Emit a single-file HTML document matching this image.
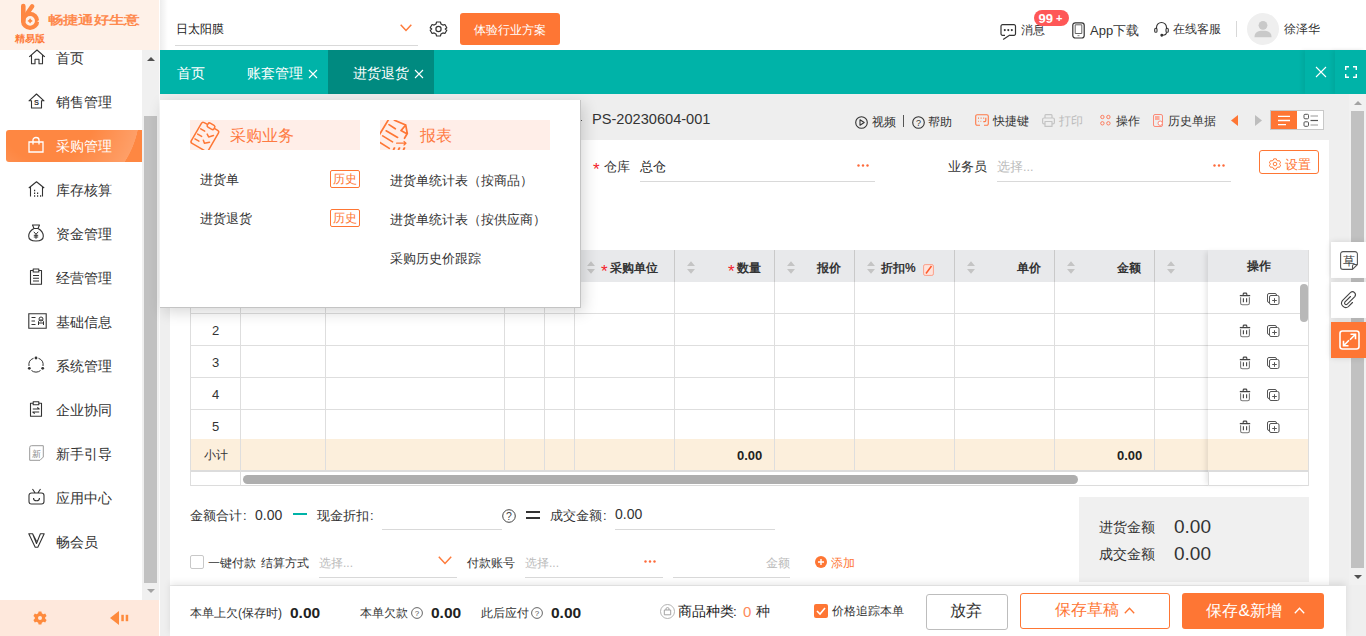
<!DOCTYPE html>
<html><head><meta charset="utf-8">
<style>
*{box-sizing:border-box;margin:0;padding:0}
html,body{width:1366px;height:636px;overflow:hidden;background:#efefef;font-family:"Liberation Sans",sans-serif;color:#333;font-size:13px}
.a{position:absolute}
.t{position:absolute;white-space:nowrap;line-height:1}
svg{position:absolute;overflow:visible}
/* sidebar */
#side{left:0;top:0;width:160px;height:636px;background:#fff}
#logo{left:0;top:0;width:159px;height:50px;background:#fef1e8}
.mi{position:absolute;left:56px;font-size:14px;color:#333;line-height:1;white-space:nowrap}
#sbtrack{left:142px;top:50px;width:17px;height:550px;background:#f0f0f0}
#sbthumb{left:144px;top:116px;width:13px;height:467px;background:#c1c1c1}
#sbot{left:0;top:600px;width:159px;height:36px;background:#fee8dc}
/* header */
#hdr{left:160px;top:0;width:1206px;height:50px;background:#fff}
#tabs{left:160px;top:50px;width:1206px;height:44px;background:#00b3a8}
.tab{position:absolute;top:66px;color:#fff;font-size:14px;line-height:1;white-space:nowrap}
/* content */
#tool{left:160px;top:94px;width:1190px;height:46px;background:#eeeeee}
#panel{left:170px;top:140px;width:1159px;height:445px;background:#fff}
#vtrack{left:1349px;top:94px;width:17px;height:491px;background:#f1f1f1}
</style></head>
<body>
<div id="side" class="a"></div>
<div id="logo" class="a"></div>
<div id="sbtrack" class="a"></div>
<div id="sbthumb" class="a"></div>
<div id="sbot" class="a"></div>

<!-- logo -->
<svg style="left:0;top:0" width="50" height="35" viewBox="0 0 50 35">
<path d="M23.3 6 V21" stroke="#fe8843" stroke-width="4.6" stroke-linecap="round"/>
<path d="M32.2 6.3 L27.2 13.5" stroke="#fe8843" stroke-width="4.4" stroke-linecap="round"/>
<circle cx="30.1" cy="20.9" r="7" fill="none" stroke="#fe8843" stroke-width="4.3"/>
<path d="M39.8 19.8 L37.2 21.3 L39.8 22.6 Z" fill="#fef1e9"/>
<path d="M30.1 18.2 Q30.9 20.1 32.8 20.9 Q30.9 21.7 30.1 23.6 Q29.3 21.7 27.4 20.9 Q29.3 20.1 30.1 18.2 Z" fill="#fe8843"/>
</svg>
<div class="t" style="left:48px;top:14px;font-size:13px;color:#fe8a4e;font-weight:bold;transform:scale(1.17,0.9);transform-origin:0 0">畅捷通好生意</div>
<div class="t" style="left:15px;top:34px;font-size:10px;color:#fe7c3a;font-weight:bold">精易版</div>
<!-- active item -->
<div class="a" style="left:6px;top:130px;width:136px;height:32px;border-radius:3px 0 0 3px;background:radial-gradient(circle 94px at 40px -19px,rgba(255,255,255,0) 50px,rgba(255,255,255,0.2) 93.5px,rgba(255,255,255,0) 94px),#fe8742"></div>
<div class="mi" style="top:51px">首页</div>
<div class="mi" style="top:95px">销售管理</div>
<div class="mi" style="top:139px;color:#fff">采购管理</div>
<div class="mi" style="top:183px">库存核算</div>
<div class="mi" style="top:227px">资金管理</div>
<div class="mi" style="top:271px">经营管理</div>
<div class="mi" style="top:315px">基础信息</div>
<div class="mi" style="top:359px">系统管理</div>
<div class="mi" style="top:403px">企业协同</div>
<div class="mi" style="top:447px">新手引导</div>
<div class="mi" style="top:491px">应用中心</div>
<div class="mi" style="top:535px">畅会员</div>
<!-- sidebar icons -->
<svg style="left:28px;top:49px" width="18" height="16" viewBox="0 0 18 16" fill="none" stroke="#333" stroke-width="1.1" stroke-linejoin="round"><path d="M1.2 7.8 L9 1 L16.8 7.8 M3.5 6 V14.8 H7 V10.3 H11 V14.8 H14.5 V6"/></svg>
<svg style="left:28px;top:93px" width="17" height="16" viewBox="0 0 17 16" fill="none" stroke="#333" stroke-width="1.1" stroke-linejoin="round"><path d="M1 7.8 L8.5 1 L16 7.8 H13.5 V15 H3.5 V7.8 Z"/><text x="8.5" y="12.3" font-size="7.5" text-anchor="middle" fill="#333" stroke="none" font-weight="bold" font-family="Liberation Sans">S</text></svg>
<svg style="left:28px;top:137px" width="16" height="16" viewBox="0 0 16 16" fill="none" stroke="#fff" stroke-width="1.3"><path d="M1 5 H15 V15 H1 Z M5 5 V3 A3 2.5 0 0 1 11 3 V5 M5 5 V7.5 M11 5 V7.5"/></svg>
<svg style="left:28px;top:181px" width="17" height="16" viewBox="0 0 17 16" fill="none" stroke="#333" stroke-width="1.1" stroke-linejoin="round"><path d="M0.8 7 L8.5 0.8 L16.2 7 M2.5 5.8 V15.5 M14.5 5.8 V15.5"/><path d="M6 9.5 h1.2 M6 12.3 h1.2 M9 12.3 h1.2 M6 15 h1.2 M9 15 h1.2 M12 15 h1.2" stroke-width="1.5"/></svg>
<svg style="left:28px;top:224px" width="16" height="18" viewBox="0 0 16 18" fill="none" stroke="#333" stroke-width="1.1" stroke-linejoin="round"><path d="M4.5 1 H11.5 L10 4.5 C13.8 6.5 15.3 9.5 15.3 12.3 C15.3 15.8 12.5 17 8 17 C3.5 17 0.7 15.8 0.7 12.3 C0.7 9.5 2.2 6.5 6 4.5 Z M5.5 4.5 H10.5"/><path d="M5.8 7.8 L8 10.3 L10.2 7.8 M8 10.3 V14.8 M5.8 11.3 H10.2 M5.8 13 H10.2" stroke-width="1"/></svg>
<svg style="left:29px;top:268px" width="14" height="17" viewBox="0 0 14 17" fill="none" stroke="#333" stroke-width="1.1" stroke-linejoin="round"><path d="M4 2.5 H1.5 V16.3 H12.5 V2.5 H10 M4.2 1 H9.8 V4 H4.2 Z M4 7.5 H10 M4 10.3 H10 M4 13 H10"/></svg>
<svg style="left:28px;top:313px" width="19" height="16" viewBox="0 0 19 16" fill="none" stroke="#333" stroke-width="1.1"><path d="M0.8 0.8 H18.2 V15.2 H0.8 Z"/><path d="M3.5 4.5 H7.5 M3.5 8 H7 M3.5 11.5 H7.5 M10.5 12 V8.5 A2.8 3 0 0 1 15.5 8.5 V12 M10.5 10 H15.5" stroke-width="1"/><circle cx="13" cy="6" r="2" stroke-width="1"/></svg>
<svg style="left:27px;top:356px" width="18" height="17" viewBox="0 0 18 17" fill="none" stroke="#333" stroke-width="1"><path d="M6.5 2.3 A7 7 0 0 0 2 10 M11.5 2.3 A7 7 0 0 1 16 10 M4.5 14.5 A7 7 0 0 0 13.5 14.5"/><circle cx="9" cy="2" r="1.4" fill="#333" stroke="none"/><circle cx="2.3" cy="12.3" r="1.4" fill="#333" stroke="none"/><circle cx="15.7" cy="12.3" r="1.4" fill="#333" stroke="none"/></svg>
<svg style="left:29px;top:401px" width="14" height="16" viewBox="0 0 14 16" fill="none" stroke="#333" stroke-width="1.1" stroke-linejoin="round"><path d="M4 2.3 H1.5 V15.3 H12.5 V2.3 H10 M4.2 0.8 H9.8 V3.8 H4.2 Z M3.8 8 H10.2 L8.3 6.3 M10.2 11 H3.8 L5.7 12.7"/></svg>
<svg style="left:29px;top:445px" width="15" height="16" viewBox="0 0 15 16" fill="none" stroke="#999" stroke-width="1"><path d="M2.5 0.7 H14.3 V12 L11 15.3 H0.7 V2.5 A1.8 1.8 0 0 1 2.5 0.7 Z"/><text x="7.5" y="11.8" font-size="9" text-anchor="middle" fill="#888" stroke="none">新</text></svg>
<svg style="left:28px;top:488px" width="17" height="17" viewBox="0 0 17 17" fill="none" stroke="#333" stroke-width="1.1" stroke-linejoin="round"><path d="M3.5 5 H13.5 A2.5 2.5 0 0 1 16 7.5 V13.5 A2.5 2.5 0 0 1 13.5 16 H3.5 A2.5 2.5 0 0 1 1 13.5 V7.5 A2.5 2.5 0 0 1 3.5 5 Z M4.5 1 L7 4.8 M12.5 1 L10 4.8 M5.5 10 A3 2.8 0 0 0 11.5 10"/></svg>
<svg style="left:28px;top:533px" width="17" height="15" viewBox="0 0 17 15" fill="none" stroke="#333" stroke-width="1.1" stroke-linejoin="round"><path d="M0.8 0.8 H4.6 L8.5 10.5 L12.4 0.8 H16.2 L9.8 14.2 H7.2 Z M4.6 0.8 L8.5 8.3"/></svg>
<!-- sidebar scroll arrows -->
<svg style="left:147px;top:57px" width="8" height="4"><path d="M0 4 L4 0 L8 4 Z" fill="#505050"/></svg>
<svg style="left:147px;top:589px" width="8" height="4"><path d="M0 0 L4 4 L8 0 Z" fill="#a3a3a3"/></svg>
<!-- bottom icons -->
<svg style="left:33px;top:611px" width="14" height="14" viewBox="0 0 14 14"><path d="M5.6 0.5 H8.4 L8.8 2.3 L10.4 3.2 L12.2 2.6 L13.6 5 L12.2 6.3 V7.7 L13.6 9 L12.2 11.4 L10.4 10.8 L8.8 11.7 L8.4 13.5 H5.6 L5.2 11.7 L3.6 10.8 L1.8 11.4 L0.4 9 L1.8 7.7 V6.3 L0.4 5 L1.8 2.6 L3.6 3.2 L5.2 2.3 Z" fill="#fe8a3d"/><circle cx="7" cy="7" r="2" fill="#fee8dc"/></svg>
<svg style="left:110px;top:611px" width="19" height="14" viewBox="0 0 19 14"><path d="M0 7 L9 0 V14 Z" fill="#fe8a3d"/><rect x="11.3" y="3.8" width="2.5" height="6.4" fill="#fe8a3d"/><rect x="15.7" y="3.8" width="2.5" height="6.4" fill="#fe8a3d"/></svg>

<div id="hdr" class="a"></div>
<div class="a" style="left:160px;top:0;width:8px;height:50px;background:linear-gradient(to right,rgba(0,0,0,0.07),rgba(0,0,0,0))"></div>
<div class="a" style="left:159px;top:50px;width:1px;height:550px;background:#fafafa"></div>
<div id="tabs" class="a"></div>

<!-- header -->
<div class="t" style="left:176px;top:23px;font-size:12px;color:#222">日太阳膜</div>
<div class="a" style="left:175px;top:45px;width:243px;height:1px;background:#d9d9d9"></div>
<svg style="left:400px;top:24px" width="12" height="8" viewBox="0 0 12 8"><path d="M0.7 0.7 L6 6.5 L11.3 0.7" fill="none" stroke="#fe7a3a" stroke-width="1.5"/></svg>
<svg style="left:430px;top:21px" width="17" height="16" viewBox="0 0 17 16"><path d="M6.6 1 H10.4 L11 3 L12.9 4.1 L14.9 3.5 L16.8 6.7 L15.3 8 L16.8 9.3 L14.9 12.5 L12.9 11.9 L11 13 L10.4 15 H6.6 L6 13 L4.1 11.9 L2.1 12.5 L0.2 9.3 L1.7 8 L0.2 6.7 L2.1 3.5 L4.1 4.1 L6 3 Z" fill="none" stroke="#333" stroke-width="1.2" stroke-linejoin="round"/><circle cx="8.5" cy="8" r="2.6" fill="none" stroke="#333" stroke-width="1.2"/></svg>
<div class="a" style="left:460px;top:13px;width:100px;height:32px;border-radius:3px;background:#fe7634"></div>
<div class="t" style="left:474px;top:24px;font-size:12px;color:#fff">体验行业方案</div>
<!-- right header -->
<svg style="left:1000px;top:24px" width="17" height="16" viewBox="0 0 17 16"><path d="M9.5 11.3 H14 A1.5 1.5 0 0 0 15.5 9.8 V2.2 A1.5 1.5 0 0 0 14 0.7 H2.5 A1.5 1.5 0 0 0 1 2.2 V9.8 A1.5 1.5 0 0 0 2.5 11.3 H5" fill="none" stroke="#333" stroke-width="1.2"/><path d="M9.5 11.3 L3.5 15.2" fill="none" stroke="#333" stroke-width="1.2" stroke-linecap="round"/><circle cx="4.8" cy="6.1" r="1.05" fill="#333"/><circle cx="8.3" cy="6.1" r="1.05" fill="#333"/><circle cx="11.8" cy="6.1" r="1.05" fill="#333"/></svg>
<div class="t" style="left:1021px;top:24px;font-size:12px;color:#333">消息</div>
<div class="a" style="left:1034px;top:10px;width:35px;height:16px;border-radius:8px;background:#fe5757"></div>
<div class="t" style="left:1038.5px;top:11.5px;font-size:13px;color:#fff;font-weight:bold">99<span style="font-size:11px;margin-left:3px;position:relative;top:-0.5px">+</span></div>
<svg style="left:1072px;top:21.5px" width="13" height="17" viewBox="0 0 13 17"><rect x="0.8" y="0.8" width="11.4" height="15.2" rx="2.5" fill="none" stroke="#333" stroke-width="1.2"/><path d="M3.2 2.8 H9.8 V11.5 H3.2 Z" fill="none" stroke="#555" stroke-width="0.9"/><path d="M5.5 13.6 H7.5" stroke="#999" stroke-width="1.2"/></svg>
<div class="t" style="left:1090px;top:24px;font-size:13px;color:#333">App下载</div>
<svg style="left:1154px;top:20.5px" width="15" height="17" viewBox="0 0 15 17" fill="none" stroke="#333" stroke-width="1.1"><path d="M2.5 8 V6.5 A5 5 0 0 1 12.5 6.5 V8"/><rect x="0.7" y="7.3" width="2.3" height="4" rx="1.1"/><rect x="12" y="7.3" width="2.3" height="4" rx="1.1"/><path d="M12.5 11.3 C12.5 13.2 11 14.3 8.5 14.3"/><circle cx="7.8" cy="14.3" r="0.9" fill="#333"/></svg>
<div class="t" style="left:1173px;top:23px;font-size:12px;color:#333">在线客服</div>
<div class="a" style="left:1236px;top:21px;width:1px;height:16px;background:#d8d8d8"></div>
<div class="a" style="left:1247px;top:13px;width:32px;height:32px;border-radius:50%;background:#efefef"></div>
<svg style="left:1255px;top:20px" width="16" height="18" viewBox="0 0 16 18"><circle cx="8" cy="5.3" r="4.4" fill="#c9c9c9"/><path d="M-0.5 17.2 C-0.5 12.5 2.5 10.8 8 10.8 C13.5 10.8 16.5 12.5 16.5 17.2 Z" fill="#c9c9c9"/></svg>
<div class="t" style="left:1284px;top:23px;font-size:12px;color:#333">徐泽华</div>
<!-- tabs -->
<div class="a" style="left:328px;top:50px;width:106px;height:44px;background:#008a80"></div>
<div class="tab" style="left:177px">首页</div>
<div class="tab" style="left:247px">账套管理</div>
<svg style="left:308px;top:69px" width="10" height="10"><path d="M1 1 L9 9 M9 1 L1 9" stroke="#fff" stroke-width="1.1"/></svg>
<div class="tab" style="left:353px">进货退货</div>
<svg style="left:414px;top:69px" width="10" height="10"><path d="M1 1 L9 9 M9 1 L1 9" stroke="#fff" stroke-width="1.1"/></svg>
<div class="a" style="left:1305px;top:50px;width:61px;height:44px;background:#00b3a8;box-shadow:-3px 0 4px rgba(0,0,0,0.06)"></div>
<div class="a" style="left:1335px;top:50px;width:31px;height:44px;background:#00b3a8;box-shadow:-3px 0 4px rgba(0,0,0,0.06)"></div>
<svg style="left:1315px;top:66px" width="12" height="12"><path d="M1 1 L11 11 M11 1 L1 11" stroke="#fff" stroke-width="1.1"/></svg>
<svg style="left:1345px;top:66px" width="12" height="12" fill="none" stroke="#fff" stroke-width="1.4"><path d="M0.7 4 V0.7 H4 M8 0.7 H11.3 V4 M11.3 8 V11.3 H8 M4 11.3 H0.7 V8"/></svg>
<div id="tool" class="a"></div>
<div id="panel" class="a"></div>
<div id="vtrack" class="a"></div>

<!-- toolbar -->
<div class="a" style="left:581px;top:120px;width:1px;height:1px;background:#555"></div>
<div class="t" style="left:592px;top:112px;font-size:14.6px;color:#333">PS-20230604-001</div>
<svg style="left:855px;top:115.5px" width="14" height="13" viewBox="0 0 14 13"><circle cx="6.5" cy="6.5" r="5.8" fill="none" stroke="#333" stroke-width="1.1"/><path d="M5 3.8 L9.2 6.5 L5 9.2 Z" fill="none" stroke="#333" stroke-width="1.1" stroke-linejoin="round"/></svg>
<div class="t" style="left:872px;top:116px;font-size:12px;color:#333">视频</div>
<div class="a" style="left:903px;top:115px;width:1px;height:12px;background:#555"></div>
<svg style="left:912px;top:115.5px" width="13" height="13" viewBox="0 0 13 13"><circle cx="6.5" cy="6.5" r="5.8" fill="none" stroke="#333" stroke-width="1.1"/><text x="6.5" y="10" font-size="9" text-anchor="middle" fill="#333" font-family="Liberation Sans">?</text></svg>
<div class="t" style="left:928px;top:116px;font-size:12px;color:#333">帮助</div>
<svg style="left:975px;top:114px" width="14" height="12" viewBox="0 0 14 12" fill="none" stroke="#fe7a48" stroke-width="1.1"><path d="M5 11.3 H2.2 A1.5 1.5 0 0 1 0.7 9.8 V2.2 A1.5 1.5 0 0 1 2.2 0.7 H11.8 A1.5 1.5 0 0 1 13.3 2.2 V9.8 A1.5 1.5 0 0 1 11.8 11.3 H9" stroke="#fe7a48"/><path d="M3 4.2 h1 M5.6 4.2 h1 M8.2 4.2 h1 M3 7.3 h0.6 M5.6 7.3 h0.6" stroke-width="1.3"/><path d="M10.8 3.8 V6.6 A1 1 0 0 1 9.8 7.6 H8.3" stroke-width="1.2"/></svg>
<div class="t" style="left:993px;top:115px;font-size:12px;color:#333">快捷键</div>
<svg style="left:1042px;top:114px" width="13" height="13" viewBox="0 0 13 13" fill="none" stroke="#c4c4c4" stroke-width="1.2" stroke-linejoin="round"><path d="M3 4 V1.5 A1 1 0 0 1 4 0.6 H9 A1 1 0 0 1 10 1.5 V4 M3 9.8 H2 A1.4 1.4 0 0 1 0.6 8.4 V5.4 A1.4 1.4 0 0 1 2 4 H11 A1.4 1.4 0 0 1 12.4 5.4 V8.4 A1.4 1.4 0 0 1 11 9.8 H10 M3 7.5 H10 V12.4 H3 Z"/></svg>
<div class="t" style="left:1059px;top:115px;font-size:12px;color:#bbb">打印</div>
<svg style="left:1100px;top:114px" width="11" height="12" viewBox="0 0 11 12" fill="none" stroke="#fd7d5e" stroke-width="1"><circle cx="2.4" cy="3" r="1.7"/><circle cx="8.4" cy="3" r="1.7"/><circle cx="2.4" cy="9.3" r="1.7"/><circle cx="8.4" cy="9.3" r="1.7"/></svg>
<div class="t" style="left:1116px;top:115px;font-size:12px;color:#333">操作</div>
<svg style="left:1153px;top:114px" width="10" height="13" viewBox="0 0 10 13" fill="none" stroke="#fb8a78" stroke-width="1"><path d="M2 0.5 H8 A1.5 1.5 0 0 1 9.5 2 V11 A1.5 1.5 0 0 1 8 12.5 H2 A1.5 1.5 0 0 1 0.5 11 V2 A1.5 1.5 0 0 1 2 0.5 Z"/><rect x="2" y="2" width="4.5" height="4" fill="#fcaa9a" stroke="none"/><circle cx="7.2" cy="9.2" r="2.2" fill="#fff"/></svg>
<div class="t" style="left:1168px;top:115px;font-size:12px;color:#333">历史单据</div>
<svg style="left:1231px;top:115px" width="7" height="11"><path d="M7 0 L0 5.5 L7 11 Z" fill="#fe7634"/></svg>
<svg style="left:1255px;top:115px" width="7" height="11"><path d="M0 0 L7 5.5 L0 11 Z" fill="#bdbdbd"/></svg>
<div class="a" style="left:1270px;top:110px;width:54px;height:20px;border:1px solid #c8c8c8;background:#fff"></div>
<div class="a" style="left:1271px;top:111px;width:26px;height:18px;background:#fe7634"></div>
<svg style="left:1277px;top:114px" width="14" height="12"><path d="M1 2.3 H13 M1 6.5 H13 M1 10.7 H9" stroke="#fff" stroke-width="1.3"/></svg>
<svg style="left:1302.5px;top:113px" width="16" height="14" fill="none"><rect x="1" y="1.3" width="4.5" height="4.5" rx="1" stroke="#555" stroke-width="1"/><rect x="1" y="8.8" width="4.5" height="4.5" rx="1" stroke="#555" stroke-width="1"/><path d="M7.5 3 H15 M7.5 12 H15" stroke="#bbb" stroke-width="1.3"/><path d="M7.5 7.5 H15" stroke="#555" stroke-width="1.2"/></svg>
<!-- vertical scrollbar -->
<svg style="left:1354px;top:101px" width="8" height="4"><path d="M0 4 L4 0 L8 4 Z" fill="#a3a3a3"/></svg>
<div class="a" style="left:1351px;top:111px;width:13px;height:457px;background:#c1c1c1"></div>
<svg style="left:1354px;top:575px" width="8" height="4"><path d="M0 0 L4 4 L8 0 Z" fill="#505050"/></svg>
<!-- form -->
<div class="t" style="left:593px;top:161px;font-size:17px;color:#f5222d">*</div>
<div class="t" style="left:604px;top:161px;font-size:12.5px;color:#333">仓库</div>
<div class="t" style="left:640px;top:161px;font-size:12.5px;color:#222">总仓</div>
<div class="a" style="left:640px;top:181px;width:235px;height:1px;background:#d9d9d9"></div>
<svg style="left:857px;top:164px" width="12" height="3"><circle cx="1.5" cy="1.5" r="1.2" fill="#fe6a3a"/><circle cx="6" cy="1.5" r="1.2" fill="#fe6a3a"/><circle cx="10.5" cy="1.5" r="1.2" fill="#fe6a3a"/></svg>
<div class="t" style="left:948px;top:161px;font-size:12.5px;color:#333">业务员</div>
<div class="t" style="left:997px;top:161px;font-size:12.5px;color:#bbb">选择...</div>
<div class="a" style="left:997px;top:181px;width:234px;height:1px;background:#d9d9d9"></div>
<svg style="left:1213px;top:164px" width="12" height="3"><circle cx="1.5" cy="1.5" r="1.2" fill="#fe6a3a"/><circle cx="6" cy="1.5" r="1.2" fill="#fe6a3a"/><circle cx="10.5" cy="1.5" r="1.2" fill="#fe6a3a"/></svg>
<div class="a" style="left:1259px;top:150px;width:60px;height:24px;border:1px solid #fe7634;border-radius:3px;background:#fff"></div>
<svg style="left:1269px;top:157.5px" width="12" height="12" viewBox="0 0 14 14"><path d="M5.5 1 H8.5 L9 2.6 L10.5 3.5 L12.1 3 L13.6 5.6 L12.4 6.6 V7.4 L13.6 8.4 L12.1 11 L10.5 10.5 L9 11.4 L8.5 13 H5.5 L5 11.4 L3.5 10.5 L1.9 11 L0.4 8.4 L1.6 7.4 V6.6 L0.4 5.6 L1.9 3 L3.5 3.5 L5 2.6 Z" fill="none" stroke="#fe7634" stroke-width="1.1" stroke-linejoin="round"/><circle cx="7" cy="7" r="2.1" fill="none" stroke="#fe7634" stroke-width="1.1"/></svg>
<div class="t" style="left:1285px;top:157.5px;font-size:13px;color:#fe7634">设置</div>
<!-- table -->
<div class="a" style="left:190px;top:250px;width:1118px;height:32px;background:#e8e9eb"></div>
<div class="a" style="left:190px;top:282px;width:1118px;height:157px;background:#fff"></div>
<div class="a" style="left:190px;top:439px;width:1118px;height:31px;background:#fcefdc"></div>
<div class="a" style="left:190px;top:470px;width:1118px;height:2px;background:#dcdcdc"></div>
<div class="a" style="left:190px;top:485px;width:1119px;height:1px;background:#dcdcdc"></div>
<div class="a" style="left:190px;top:313px;width:1118px;height:1px;background:#dedede"></div>
<div class="a" style="left:190px;top:345px;width:1118px;height:1px;background:#dedede"></div>
<div class="a" style="left:190px;top:377px;width:1118px;height:1px;background:#dedede"></div>
<div class="a" style="left:190px;top:409px;width:1118px;height:1px;background:#dedede"></div>
<div class="a" style="left:190px;top:250px;width:1px;height:32px;background:#e8e9eb"></div>
<div class="a" style="left:190px;top:282px;width:1px;height:204px;background:#dedede"></div>
<div class="a" style="left:240px;top:250px;width:1px;height:32px;background:#c9c9c9"></div>
<div class="a" style="left:240px;top:282px;width:1px;height:204px;background:#dedede"></div>
<div class="a" style="left:325px;top:250px;width:1px;height:32px;background:#c9c9c9"></div>
<div class="a" style="left:325px;top:282px;width:1px;height:188px;background:#dedede"></div>
<div class="a" style="left:504px;top:250px;width:1px;height:32px;background:#c9c9c9"></div>
<div class="a" style="left:504px;top:282px;width:1px;height:188px;background:#dedede"></div>
<div class="a" style="left:544px;top:250px;width:1px;height:32px;background:#c9c9c9"></div>
<div class="a" style="left:544px;top:282px;width:1px;height:188px;background:#dedede"></div>
<div class="a" style="left:574px;top:250px;width:1px;height:32px;background:#c9c9c9"></div>
<div class="a" style="left:574px;top:282px;width:1px;height:188px;background:#dedede"></div>
<div class="a" style="left:674px;top:250px;width:1px;height:32px;background:#c9c9c9"></div>
<div class="a" style="left:674px;top:282px;width:1px;height:188px;background:#dedede"></div>
<div class="a" style="left:774px;top:250px;width:1px;height:32px;background:#c9c9c9"></div>
<div class="a" style="left:774px;top:282px;width:1px;height:188px;background:#dedede"></div>
<div class="a" style="left:854px;top:250px;width:1px;height:32px;background:#c9c9c9"></div>
<div class="a" style="left:854px;top:282px;width:1px;height:188px;background:#dedede"></div>
<div class="a" style="left:954px;top:250px;width:1px;height:32px;background:#c9c9c9"></div>
<div class="a" style="left:954px;top:282px;width:1px;height:188px;background:#dedede"></div>
<div class="a" style="left:1054px;top:250px;width:1px;height:32px;background:#c9c9c9"></div>
<div class="a" style="left:1054px;top:282px;width:1px;height:188px;background:#dedede"></div>
<div class="a" style="left:1154px;top:250px;width:1px;height:32px;background:#c9c9c9"></div>
<div class="a" style="left:1154px;top:282px;width:1px;height:188px;background:#dedede"></div>
<div class="a" style="left:1308px;top:250px;width:1px;height:32px;background:#e8e9eb"></div>
<div class="a" style="left:1308px;top:282px;width:1px;height:204px;background:#dedede"></div>
<div class="a" style="left:1208px;top:250px;width:100px;height:236px;box-shadow:-4px 0 5px -2px rgba(0,0,0,0.10)"></div>
<div class="a" style="left:1208px;top:250px;width:100px;height:32px;background:#e8e9eb"></div>
<div class="a" style="left:1208px;top:282px;width:100px;height:157px;background:#fff"></div>
<div class="a" style="left:1208px;top:439px;width:100px;height:31px;background:#fcefdc"></div>
<div class="a" style="left:1208px;top:470px;width:100px;height:2px;background:#dcdcdc"></div>
<div class="a" style="left:1208px;top:472px;width:100px;height:13px;background:#fff"></div>
<div class="a" style="left:1208px;top:313px;width:100px;height:1px;background:#dedede"></div>
<div class="a" style="left:1208px;top:345px;width:100px;height:1px;background:#dedede"></div>
<div class="a" style="left:1208px;top:377px;width:100px;height:1px;background:#dedede"></div>
<div class="a" style="left:1208px;top:409px;width:100px;height:1px;background:#dedede"></div>
<div class="a" style="left:1208px;top:472px;width:1px;height:14px;background:#dedede"></div>
<div class="a" style="left:1308px;top:250px;width:1px;height:236px;background:#dedede"></div>
<div class="t" style="left:1247px;top:260px;font-size:12px;font-weight:bold;color:#333">操作</div>
<svg style="left:1239px;top:292px" width="12" height="14" viewBox="0 0 12 14" fill="none" stroke="#444" stroke-width="1.1"><path d="M0.8 3.6 H11.2" stroke-width="1.3"/><path d="M4.2 3.6 V2 A0.9 0.9 0 0 1 5.1 1.1 H6.9 A0.9 0.9 0 0 1 7.8 2 V3.6"/><path d="M1.6 5.2 V11 A1.8 1.8 0 0 0 3.4 12.8 H8.6 A1.8 1.8 0 0 0 10.4 11 V5.2" stroke="#777"/><path d="M4.4 6.3 V10.2 M7.6 6.3 V10.2"/></svg>
<svg style="left:1267px;top:293px" width="13" height="13" viewBox="0 0 13 13" fill="none" stroke="#555" stroke-width="1"><rect x="0.5" y="0.5" width="9" height="9" rx="1.5"/><rect x="2.5" y="2.5" width="9.5" height="9" rx="1.5" fill="#fff"/><path d="M7.5 5.2 V9.8 M5.2 7.5 H9.8"/></svg>
<svg style="left:1239px;top:324px" width="12" height="14" viewBox="0 0 12 14" fill="none" stroke="#444" stroke-width="1.1"><path d="M0.8 3.6 H11.2" stroke-width="1.3"/><path d="M4.2 3.6 V2 A0.9 0.9 0 0 1 5.1 1.1 H6.9 A0.9 0.9 0 0 1 7.8 2 V3.6"/><path d="M1.6 5.2 V11 A1.8 1.8 0 0 0 3.4 12.8 H8.6 A1.8 1.8 0 0 0 10.4 11 V5.2" stroke="#777"/><path d="M4.4 6.3 V10.2 M7.6 6.3 V10.2"/></svg>
<svg style="left:1267px;top:325px" width="13" height="13" viewBox="0 0 13 13" fill="none" stroke="#555" stroke-width="1"><rect x="0.5" y="0.5" width="9" height="9" rx="1.5"/><rect x="2.5" y="2.5" width="9.5" height="9" rx="1.5" fill="#fff"/><path d="M7.5 5.2 V9.8 M5.2 7.5 H9.8"/></svg>
<svg style="left:1239px;top:356px" width="12" height="14" viewBox="0 0 12 14" fill="none" stroke="#444" stroke-width="1.1"><path d="M0.8 3.6 H11.2" stroke-width="1.3"/><path d="M4.2 3.6 V2 A0.9 0.9 0 0 1 5.1 1.1 H6.9 A0.9 0.9 0 0 1 7.8 2 V3.6"/><path d="M1.6 5.2 V11 A1.8 1.8 0 0 0 3.4 12.8 H8.6 A1.8 1.8 0 0 0 10.4 11 V5.2" stroke="#777"/><path d="M4.4 6.3 V10.2 M7.6 6.3 V10.2"/></svg>
<svg style="left:1267px;top:357px" width="13" height="13" viewBox="0 0 13 13" fill="none" stroke="#555" stroke-width="1"><rect x="0.5" y="0.5" width="9" height="9" rx="1.5"/><rect x="2.5" y="2.5" width="9.5" height="9" rx="1.5" fill="#fff"/><path d="M7.5 5.2 V9.8 M5.2 7.5 H9.8"/></svg>
<svg style="left:1239px;top:388px" width="12" height="14" viewBox="0 0 12 14" fill="none" stroke="#444" stroke-width="1.1"><path d="M0.8 3.6 H11.2" stroke-width="1.3"/><path d="M4.2 3.6 V2 A0.9 0.9 0 0 1 5.1 1.1 H6.9 A0.9 0.9 0 0 1 7.8 2 V3.6"/><path d="M1.6 5.2 V11 A1.8 1.8 0 0 0 3.4 12.8 H8.6 A1.8 1.8 0 0 0 10.4 11 V5.2" stroke="#777"/><path d="M4.4 6.3 V10.2 M7.6 6.3 V10.2"/></svg>
<svg style="left:1267px;top:389px" width="13" height="13" viewBox="0 0 13 13" fill="none" stroke="#555" stroke-width="1"><rect x="0.5" y="0.5" width="9" height="9" rx="1.5"/><rect x="2.5" y="2.5" width="9.5" height="9" rx="1.5" fill="#fff"/><path d="M7.5 5.2 V9.8 M5.2 7.5 H9.8"/></svg>
<svg style="left:1239px;top:420px" width="12" height="14" viewBox="0 0 12 14" fill="none" stroke="#444" stroke-width="1.1"><path d="M0.8 3.6 H11.2" stroke-width="1.3"/><path d="M4.2 3.6 V2 A0.9 0.9 0 0 1 5.1 1.1 H6.9 A0.9 0.9 0 0 1 7.8 2 V3.6"/><path d="M1.6 5.2 V11 A1.8 1.8 0 0 0 3.4 12.8 H8.6 A1.8 1.8 0 0 0 10.4 11 V5.2" stroke="#777"/><path d="M4.4 6.3 V10.2 M7.6 6.3 V10.2"/></svg>
<svg style="left:1267px;top:421px" width="13" height="13" viewBox="0 0 13 13" fill="none" stroke="#555" stroke-width="1"><rect x="0.5" y="0.5" width="9" height="9" rx="1.5"/><rect x="2.5" y="2.5" width="9.5" height="9" rx="1.5" fill="#fff"/><path d="M7.5 5.2 V9.8 M5.2 7.5 H9.8"/></svg>
<div class="a" style="left:1300px;top:284px;width:8px;height:38px;border-radius:4px;background:#b8b8b8"></div>
<div class="t" style="left:212px;top:324px;font-size:13px;color:#333">2</div>
<div class="t" style="left:212px;top:356px;font-size:13px;color:#333">3</div>
<div class="t" style="left:212px;top:388px;font-size:13px;color:#333">4</div>
<div class="t" style="left:212px;top:420px;font-size:13px;color:#333">5</div>
<div class="t" style="left:204px;top:449px;font-size:12px;color:#333">小计</div>
<div class="t" style="left:737px;top:449px;font-size:13px;font-weight:bold;color:#222">0.00</div>
<div class="t" style="left:1117px;top:449px;font-size:13px;font-weight:bold;color:#222">0.00</div>
<div class="a" style="left:243px;top:475px;width:835px;height:9px;border-radius:4.5px;background:#aeaeae"></div>
<svg style="left:587px;top:261px" width="8" height="13" viewBox="0 0 8 13"><path d="M0 5 L4 0.3 L8 5 Z M0 8 L4 12.7 L8 8 Z" fill="#c4c4c4"/></svg>
<svg style="left:687px;top:261px" width="8" height="13" viewBox="0 0 8 13"><path d="M0 5 L4 0.3 L8 5 Z M0 8 L4 12.7 L8 8 Z" fill="#c4c4c4"/></svg>
<svg style="left:787px;top:261px" width="8" height="13" viewBox="0 0 8 13"><path d="M0 5 L4 0.3 L8 5 Z M0 8 L4 12.7 L8 8 Z" fill="#c4c4c4"/></svg>
<svg style="left:867px;top:261px" width="8" height="13" viewBox="0 0 8 13"><path d="M0 5 L4 0.3 L8 5 Z M0 8 L4 12.7 L8 8 Z" fill="#c4c4c4"/></svg>
<svg style="left:967px;top:261px" width="8" height="13" viewBox="0 0 8 13"><path d="M0 5 L4 0.3 L8 5 Z M0 8 L4 12.7 L8 8 Z" fill="#c4c4c4"/></svg>
<svg style="left:1067px;top:261px" width="8" height="13" viewBox="0 0 8 13"><path d="M0 5 L4 0.3 L8 5 Z M0 8 L4 12.7 L8 8 Z" fill="#c4c4c4"/></svg>
<svg style="left:1167px;top:261px" width="8" height="13" viewBox="0 0 8 13"><path d="M0 5 L4 0.3 L8 5 Z M0 8 L4 12.7 L8 8 Z" fill="#c4c4c4"/></svg>
<div class="t" style="left:601px;top:262.5px;font-size:17px;color:#f5222d">*</div>
<div class="t" style="left:610px;top:262px;font-size:12px;font-weight:bold;color:#333">采购单位</div>
<div class="t" style="left:728px;top:262.5px;font-size:17px;color:#f5222d">*</div>
<div class="t" style="left:737px;top:262px;font-size:12px;font-weight:bold;color:#333">数量</div>
<div class="t" style="left:817px;top:262px;font-size:12px;font-weight:bold;color:#333">报价</div>
<div class="t" style="left:881px;top:262px;font-size:12px;font-weight:bold;color:#333">折扣%</div>
<svg style="left:923px;top:263px" width="11" height="13" viewBox="0 0 11 13"><rect x="0.6" y="1.6" width="9.8" height="10.8" rx="1.5" fill="#fde3dc" stroke="#fba08a" stroke-width="1"/><path d="M3 10.5 L8.5 3" stroke="#fe5a2a" stroke-width="1.5"/></svg>
<div class="t" style="left:1017px;top:262px;font-size:12px;font-weight:bold;color:#333">单价</div>
<div class="t" style="left:1117px;top:262px;font-size:12px;font-weight:bold;color:#333">金额</div>
<!-- bottom summary -->
<div class="t" style="left:190px;top:509px;font-size:13px;color:#333">金额合计</div><div class="t" style="left:243px;top:509px;font-size:13px;color:#333">:</div>
<div class="t" style="left:255px;top:508px;font-size:14px;color:#333">0.00</div>
<div class="a" style="left:293px;top:513px;width:14px;height:2px;background:#00b3a8"></div>
<div class="t" style="left:317px;top:509px;font-size:13px;color:#333">现金折扣</div><div class="t" style="left:370px;top:509px;font-size:13px;color:#333">:</div>
<div class="a" style="left:382px;top:529px;width:120px;height:1px;background:#d9d9d9"></div>
<svg style="left:502px;top:509px" width="14" height="14" viewBox="0 0 14 14"><circle cx="7" cy="7" r="6.3" fill="none" stroke="#444" stroke-width="1"/><text x="7" y="10.8" font-size="10.5" text-anchor="middle" fill="#444" font-family="Liberation Sans">?</text></svg>
<div class="a" style="left:526px;top:511px;width:14px;height:2px;background:#333"></div>
<div class="a" style="left:526px;top:517px;width:14px;height:2px;background:#333"></div>
<div class="t" style="left:550px;top:509px;font-size:13px;color:#333">成交金额</div><div class="t" style="left:603px;top:509px;font-size:13px;color:#333">:</div>
<div class="t" style="left:615px;top:507px;font-size:14px;color:#333">0.00</div>
<div class="a" style="left:615px;top:529px;width:160px;height:1px;background:#d9d9d9"></div>
<div class="a" style="left:190px;top:555px;width:14px;height:14px;border:1px solid #c8c8c8;border-radius:2px;background:#fff"></div>
<div class="t" style="left:208px;top:557px;font-size:12px;color:#333">一键付款</div>
<div class="t" style="left:261px;top:557px;font-size:12px;color:#333">结算方式</div>
<div class="t" style="left:319px;top:557px;font-size:12px;color:#bbb">选择...</div>
<svg style="left:438px;top:556px" width="14" height="9" viewBox="0 0 14 9"><path d="M0.8 0.8 L7 7.5 L13.2 0.8" fill="none" stroke="#fe7a3a" stroke-width="1.5"/></svg>
<div class="a" style="left:319px;top:577px;width:138px;height:1px;background:#d9d9d9"></div>
<div class="t" style="left:467px;top:557px;font-size:12px;color:#333">付款账号</div>
<div class="t" style="left:525px;top:557px;font-size:12px;color:#bbb">选择...</div>
<svg style="left:644px;top:560px" width="12" height="3"><circle cx="1.5" cy="1.5" r="1.2" fill="#fe6a3a"/><circle cx="6" cy="1.5" r="1.2" fill="#fe6a3a"/><circle cx="10.5" cy="1.5" r="1.2" fill="#fe6a3a"/></svg>
<div class="a" style="left:525px;top:577px;width:138px;height:1px;background:#d9d9d9"></div>
<div class="t" style="left:766px;top:557px;font-size:12px;color:#bbb">金额</div>
<div class="a" style="left:673px;top:577px;width:117px;height:1px;background:#d9d9d9"></div>
<svg style="left:815px;top:556px" width="12" height="12" viewBox="0 0 12 12"><circle cx="6" cy="6" r="6" fill="#fe7634"/><path d="M6 3 V9 M3 6 H9" stroke="#fff" stroke-width="1.4"/></svg>
<div class="t" style="left:831px;top:557px;font-size:12px;color:#fe7634">添加</div>
<div class="a" style="left:1079px;top:497px;width:230px;height:85px;background:#f0f0f0"></div>
<div class="t" style="left:1099px;top:520px;font-size:14px;color:#333">进货金额</div>
<div class="t" style="left:1174px;top:517px;font-size:19px;color:#333">0.00</div>
<div class="t" style="left:1099px;top:547px;font-size:14px;color:#333">成交金额</div>
<div class="t" style="left:1174px;top:544px;font-size:19px;color:#333">0.00</div>
<!-- bottom bar -->
<div class="a" style="left:170px;top:586px;width:1176px;height:50px;background:#fff;box-shadow:0 -3px 7px rgba(0,0,0,0.09)"></div>
<div class="t" style="left:190px;top:607px;font-size:12px;color:#333">本单上欠(保存时)</div>
<div class="t" style="left:290px;top:605px;font-size:15.5px;font-weight:bold;color:#222">0.00</div>
<div class="t" style="left:360px;top:607px;font-size:12px;color:#333">本单欠款</div>
<svg style="left:411px;top:607px" width="12" height="12" viewBox="0 0 12 12"><circle cx="6" cy="6" r="5.4" fill="none" stroke="#555" stroke-width="0.9"/><text x="6" y="9" font-size="8" text-anchor="middle" fill="#555" font-family="Liberation Sans">?</text></svg>
<div class="t" style="left:431px;top:605px;font-size:15.5px;font-weight:bold;color:#222">0.00</div>
<div class="t" style="left:481px;top:607px;font-size:12px;color:#333">此后应付</div>
<svg style="left:531px;top:607px" width="12" height="12" viewBox="0 0 12 12"><circle cx="6" cy="6" r="5.4" fill="none" stroke="#555" stroke-width="0.9"/><text x="6" y="9" font-size="8" text-anchor="middle" fill="#555" font-family="Liberation Sans">?</text></svg>
<div class="t" style="left:551px;top:605px;font-size:15.5px;font-weight:bold;color:#222">0.00</div>
<svg style="left:660px;top:604px" width="15" height="15" viewBox="0 0 15 15"><circle cx="7.5" cy="7.5" r="7" fill="none" stroke="#aaa" stroke-width="0.9"/><path d="M4.3 6 H10.7 V10.8 H4.3 Z M6 6 V4.8 A1.5 1.2 0 0 1 9 4.8 V6" fill="none" stroke="#999" stroke-width="0.9"/></svg>
<div class="t" style="left:678px;top:605px;font-size:13.5px;color:#222">商品种类</div><div class="t" style="left:733px;top:605px;font-size:13.5px;color:#222">:</div>
<div class="t" style="left:743px;top:604px;font-size:15px;color:#fe8a5a">0</div>
<div class="t" style="left:756px;top:605px;font-size:13.5px;color:#333">种</div>
<div class="a" style="left:814px;top:604px;width:14px;height:14px;border-radius:2px;background:#fe7634"></div>
<svg style="left:816px;top:606px" width="10" height="10"><path d="M1 5 L4 8 L9 2" fill="none" stroke="#fff" stroke-width="1.6"/></svg>
<div class="t" style="left:832px;top:605px;font-size:12px;color:#333">价格追踪本单</div>
<div class="a" style="left:926px;top:594px;width:82px;height:36px;border:1px solid #bdbdbd;border-radius:3px;background:#fff"></div>
<div class="t" style="left:950px;top:603px;font-size:16px;color:#333">放弃</div>
<div class="a" style="left:1020px;top:593px;width:150px;height:36px;border:1px solid #fe7634;border-radius:3px;background:#fff"></div>
<div class="t" style="left:1055px;top:602px;font-size:16px;color:#fe7634">保存草稿</div>
<svg style="left:1124px;top:607px" width="11" height="7"><path d="M0.8 6.2 L5.5 1.2 L10.2 6.2" fill="none" stroke="#fe7634" stroke-width="1.3"/></svg>
<div class="a" style="left:1182px;top:593px;width:142px;height:36px;border-radius:3px;background:#fe7634"></div>
<div class="t" style="left:1206px;top:602px;font-size:16px;color:#fff">保存<span style="font-size:17px;margin:0 0.5px">&amp;</span>新增</div>
<svg style="left:1294px;top:607px" width="11" height="7"><path d="M0.8 6.2 L5.5 1.2 L10.2 6.2" fill="none" stroke="#fff" stroke-width="1.3"/></svg>
<!-- right float -->
<div class="a" style="left:1331px;top:242px;width:35px;height:36px;background:#fff;box-shadow:0 0 6px rgba(0,0,0,0.12)"></div>
<div class="a" style="left:1331px;top:282px;width:35px;height:36px;background:#fff;box-shadow:0 0 6px rgba(0,0,0,0.12)"></div>
<div class="a" style="left:1331px;top:322px;width:35px;height:36px;background:#fe7634;box-shadow:0 0 6px rgba(0,0,0,0.12)"></div>
<svg style="left:1340px;top:251px" width="18" height="19" viewBox="0 0 18 19" fill="none" stroke="#555" stroke-width="1.1" stroke-linejoin="round"><path d="M3 0.6 H15 A2.4 2.4 0 0 1 17.4 3 V13.5 L12.5 18.4 H3 A2.4 2.4 0 0 1 0.6 16 V3 A2.4 2.4 0 0 1 3 0.6 Z M17.4 13.5 H14 A1.5 1.5 0 0 0 12.5 15 V18.4"/><text x="9" y="13.6" font-size="12" text-anchor="middle" fill="#444" stroke="none">草</text></svg>
<svg style="left:1340px;top:291px" width="18" height="18" viewBox="0 0 18 18" fill="none" stroke="#444" stroke-width="1.1" stroke-linecap="round"><path d="M10.5 5.5 L4.8 11.2 A1.6 1.6 0 0 0 7 13.4 L14.8 5.6 A3 3 0 0 0 10.6 1.4 L2.4 9.6 A4.3 4.3 0 0 0 8.4 15.6 L12.5 11.5"/></svg>
<svg style="left:1339px;top:330px" width="21" height="20" viewBox="0 0 21 20" fill="none" stroke="#fff" stroke-width="1.6"><rect x="1" y="1" width="19" height="18" rx="2.5"/><path d="M11.5 4.3 H16.5 V9.3 M16.5 4.3 L11 9.8 M9.5 15.7 H4.5 V10.7 M4.5 15.7 L10 10.2"/></svg>
<!-- dropdown -->
<div class="a" style="left:160px;top:100px;width:421px;height:208px;background:#fff;border-right:1px solid #c4c4c4;border-bottom:1px solid #c4c4c4;box-shadow:3px 4px 14px rgba(0,0,0,0.16)"></div>
<div class="a" style="left:190px;top:120px;width:170px;height:30px;background:#ffeee8;overflow:hidden"><svg style="left:0;top:0" width="40" height="30" viewBox="0 0 40 30" fill="none" stroke="#fe7634" stroke-width="1.5" stroke-linecap="round" stroke-linejoin="round"><g transform="translate(15 16.65) rotate(30)"><path d="M-4.5 -11.8 H-7.8 A2 2 0 0 0 -9.8 -9.8 V10.3 A2 2 0 0 0 -7.8 12.3 H7.8 A2 2 0 0 0 9.8 10.3 V-9.8 A2 2 0 0 0 7.8 -11.8 H4.5"/><rect x="-3.8" y="-14.3" width="7.6" height="4.6" rx="1.6"/><path d="M-7.6 -4.6 H-3 M-7.6 1.5 H-3 M-7.6 7 H-3"/><path d="M0.6 -3.3 L3.3 -1.6 L6.8 -5.2 M0.4 4 L2.8 6 L6.7 2.6"/></g></svg></div>
<div class="t" style="left:230px;top:128px;font-size:16px;color:#fe7a42">采购业务</div>
<div class="a" style="left:380px;top:120px;width:170px;height:30px;background:#ffeee8;overflow:hidden"><svg style="left:0;top:0" width="40" height="30" viewBox="0 0 40 30" fill="none" stroke="#fe7634" stroke-width="1.7" stroke-linecap="round" stroke-linejoin="round"><path d="M8.4 -0.2 L-0.5 14.5 M14.4 0.2 L25.7 5 L27.3 13.5 L24.5 18.3 M25.7 5 L21 10.6 L26.8 13.8"/><path d="M9 4.6 L15.3 8.8 M6.1 10.8 L17.6 17.4 M2.7 15.9 L12.5 21.9 M-0.5 22.2 L9.3 28.4"/><path d="M13.3 30 L14.8 27.4 M18.3 30 L19.8 27.4 M23.3 30 L24.8 27.4" stroke-width="1.9" stroke-linecap="butt"/><path d="M16.6 23.2 H26 M24 21.4 L26 23.2 L24 25" stroke-width="1.2"/></svg></div>
<div class="t" style="left:420px;top:128px;font-size:16px;color:#fe7a42">报表</div>
<div class="t" style="left:200px;top:173px;font-size:13px;color:#333">进货单</div>
<div class="t" style="left:200px;top:212px;font-size:13px;color:#333">进货退货</div>
<div class="a" style="left:330px;top:170px;width:30px;height:18px;border:1px solid #fe7634;border-radius:2px"></div>
<div class="t" style="left:333px;top:173px;font-size:12px;color:#fe7634">历史</div>
<div class="a" style="left:330px;top:209px;width:30px;height:18px;border:1px solid #fe7634;border-radius:2px"></div>
<div class="t" style="left:333px;top:212px;font-size:12px;color:#fe7634">历史</div>
<div class="t" style="left:390px;top:174px;font-size:13px;color:#333">进货单统计表（按商品）</div>
<div class="t" style="left:390px;top:213px;font-size:13px;color:#333">进货单统计表（按供应商）</div>
<div class="t" style="left:390px;top:252px;font-size:13px;color:#333">采购历史价跟踪</div>
</body></html>
